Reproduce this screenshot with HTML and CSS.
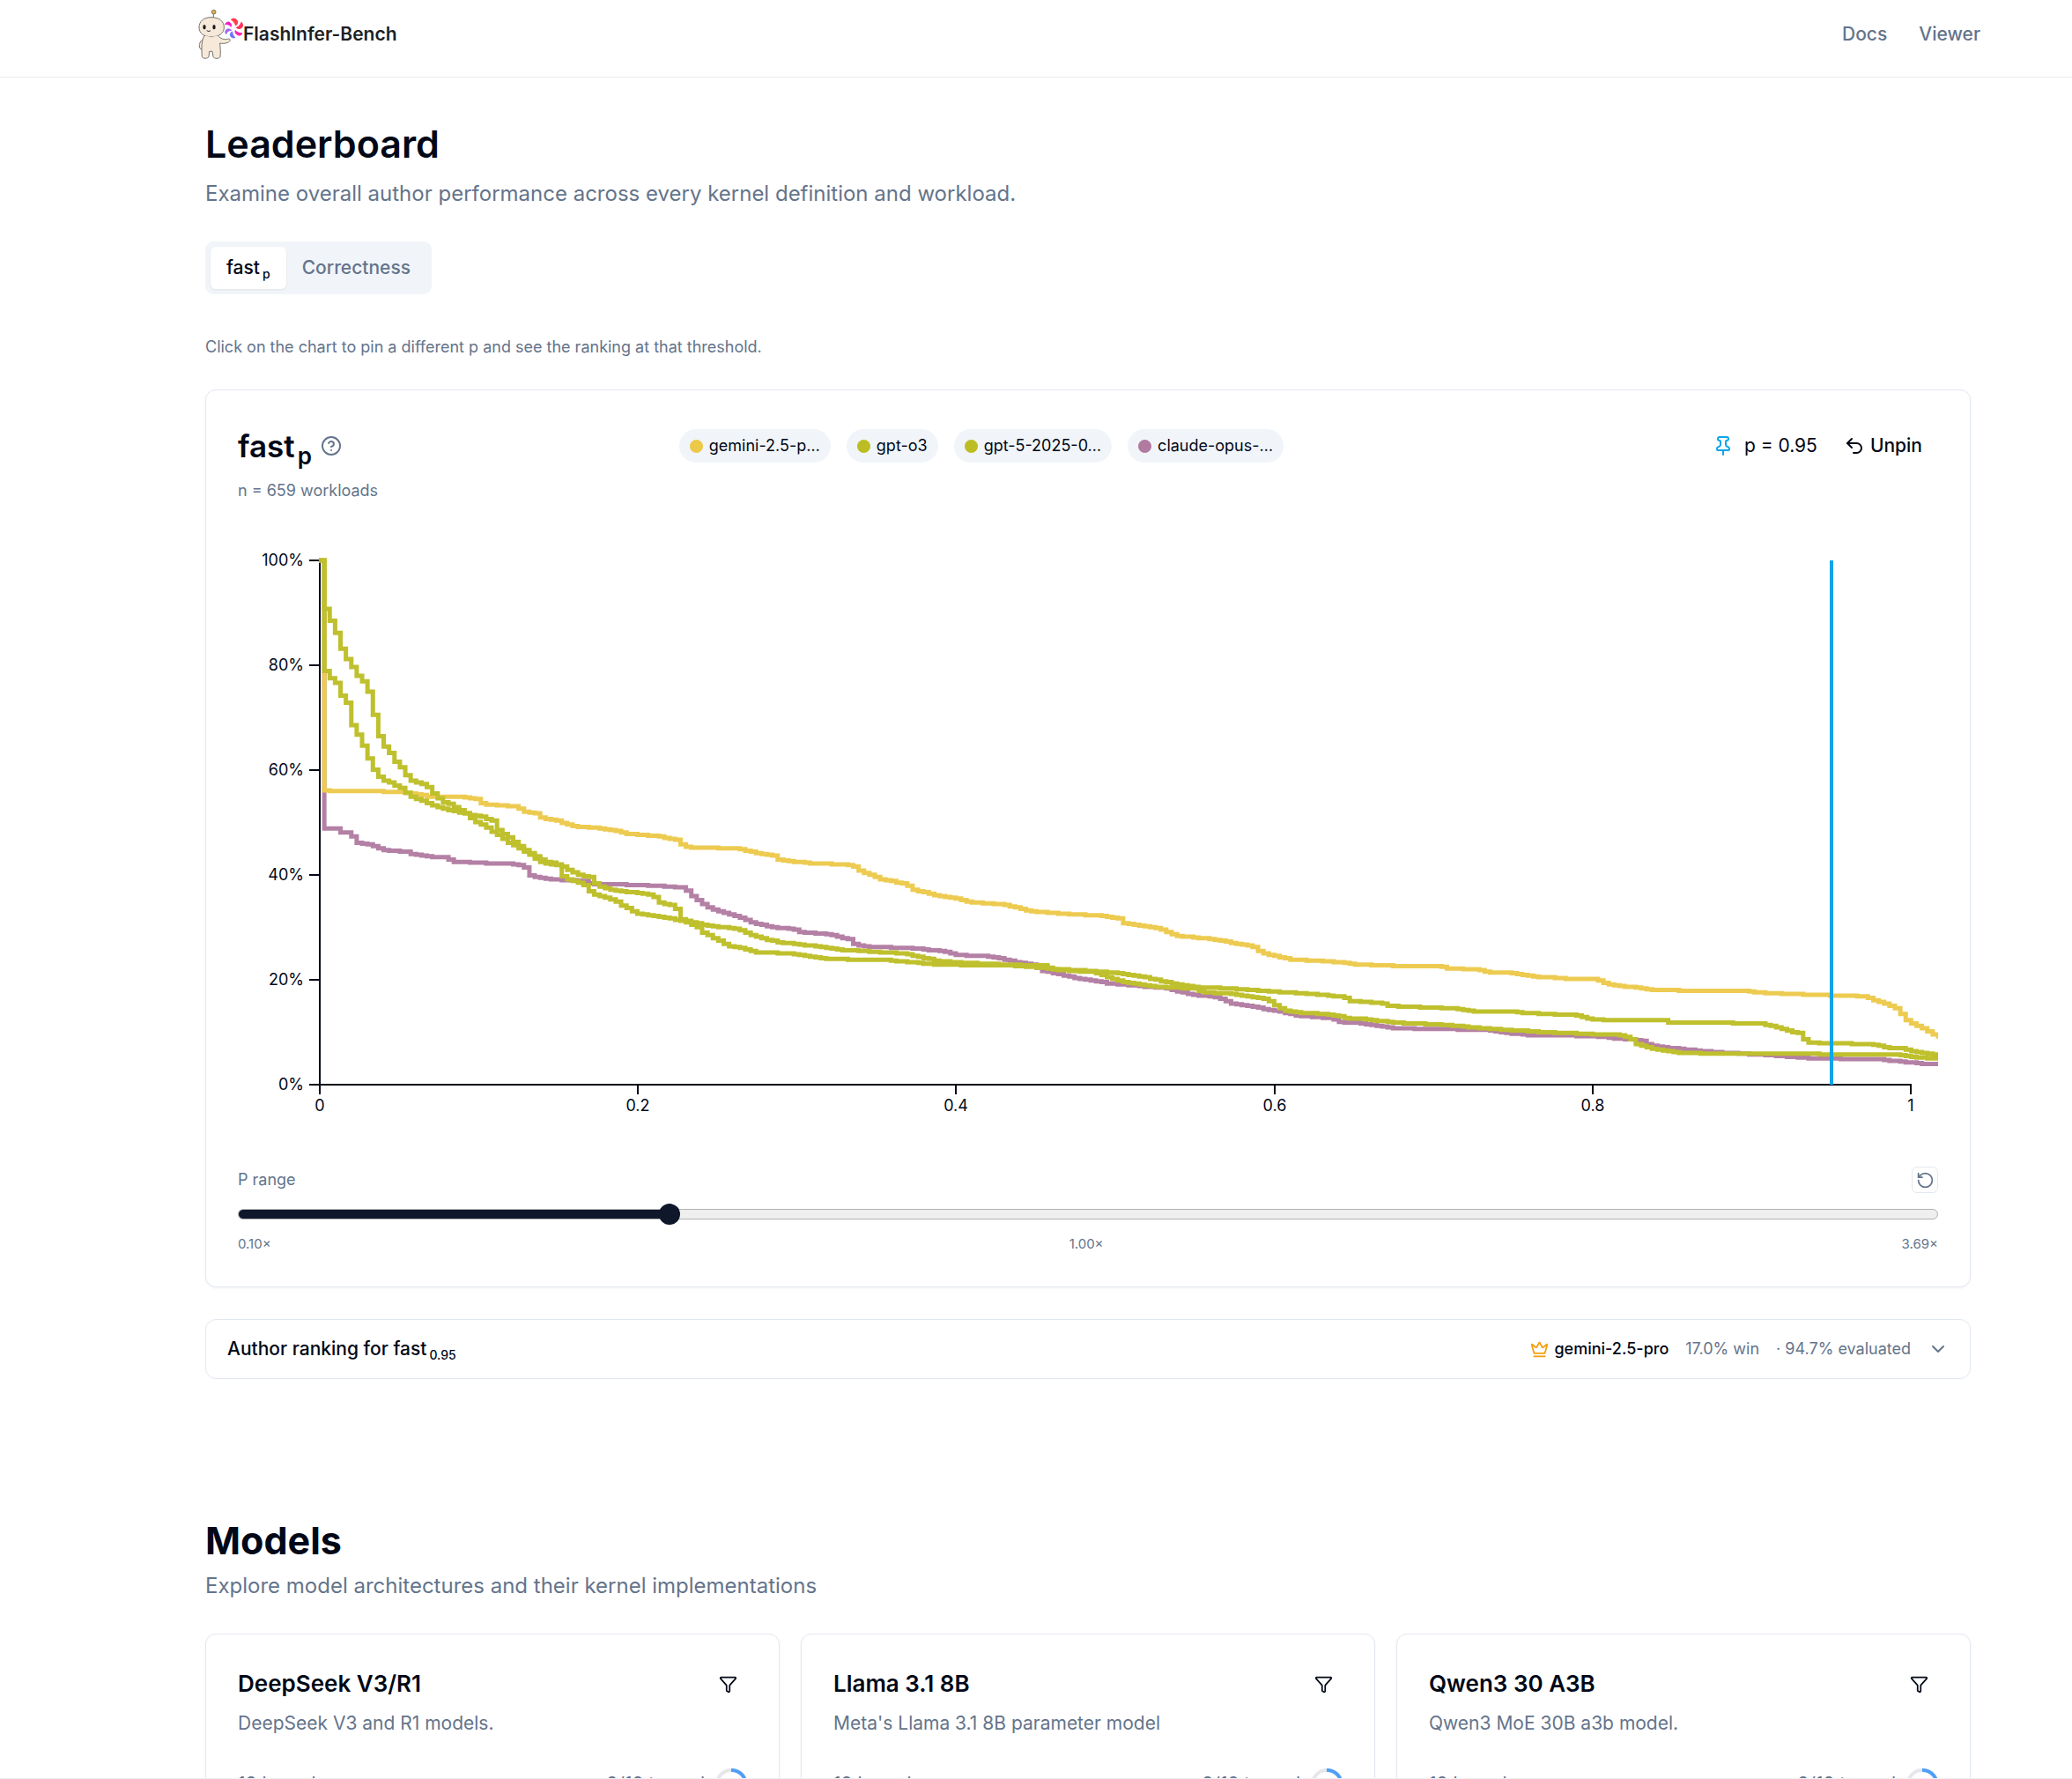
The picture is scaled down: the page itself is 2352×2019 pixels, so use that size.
FILE: index.html
```html
<!DOCTYPE html>
<html lang="en">
<head>
<meta charset="utf-8">
<title>FlashInfer-Bench</title>
<meta name="viewport" content="width=device-width, initial-scale=1">
<link rel="stylesheet" href="styles.css">
</head>
<body>
<svg class="sprite" aria-hidden="true">
  <symbol id="icon-funnel" viewBox="0 0 24 24"><path d="M10 20a1 1 0 0 0 .553.895l2 1A1 1 0 0 0 14 21v-7a2 2 0 0 1 .517-1.341L21.74 4.67A1 1 0 0 0 21 3H3a1 1 0 0 0-.742 1.67l7.225 7.989A2 2 0 0 1 10 14z"/></symbol>
</svg>
<div class="shell">
  <header class="topbar">
    <a class="brand" href="#">
      <svg class="mascot" viewBox="70 30 156 174" aria-hidden="true">
        <g fill="#f6e9da" stroke="#77716b" stroke-width="3" stroke-linejoin="round">
          <path d="M125 48v12" fill="none"/>
          <circle cx="126" cy="41" r="7" fill="#e3ad45"/>
          <path d="M91 134c-11 4-15 15-14 25 1 8 8 11 12 8"/>
          <path d="M94 121c-8 14-11 34-8 72 1 8 22 7 23 0l2-18h10l3 18c2 8 22 8 24 0 2-16 0-31-1-46 14 3 30-1 34-8 2-5-2-9-8-6-12 3-24-1-33-12z"/>
          <path d="M118 59c27 0 43 14 43 34 0 20-16 32-43 32s-42-12-42-32c0-20 15-34 42-34z"/>
        </g>
        <path d="M97 121q21 8 42 0v6H97z" fill="#f6e9da"/>
        <ellipse cx="94" cy="92" rx="5" ry="8" fill="#1c1a19"/>
        <ellipse cx="127" cy="92" rx="5" ry="8" fill="#1c1a19"/>
        <path d="M102 104q7 6 13 0" fill="none" stroke="#35302c" stroke-width="3"/>
        <g stroke-width="3" stroke-linejoin="round">
          <path d="M185 67c8-8 21-2 22 8 0 6-3 10-6 12-3-10-8-15-16-20z" fill="#ff3a4d" stroke="#ff3a4d"/>
          <path d="M220 76c7 7 6 17-2 20-6 3-12 1-15-2 9-3 13-9 17-18z" fill="#ff3158" stroke="#ff3158"/>
          <path d="M222 113c-2 9-12 9-18 4-5-4-6-9-5-13 8 7 14 9 23 9z" fill="#ff20b0" stroke="#ff20b0"/>
          <path d="M199 128c-9 3-17-2-17-9 0-6 3-10 7-11 0 9 4 15 10 20z" fill="#6d75fa" stroke="#6d75fa"/>
          <path d="M168 116c-5-7-2-16 5-17 6-1 10 1 13 4-10 1-15 5-18 13z" fill="#9b66f7" stroke="#9b66f7"/>
          <path d="M165 83c2-8 13-11 18-4 4 5 3 9 2 12-6-7-12-9-20-8z" fill="#f31fc6" stroke="#f31fc6"/>
        </g>
      </svg>
      <span class="wordmark">FlashInfer-Bench</span>
    </a>
    <nav class="nav"><a href="#">Docs</a><a href="#">Viewer</a></nav>
  </header>

  <main class="main">
    <section class="leaderboard">
      <h1 class="title">Leaderboard</h1>
      <p class="lead">Examine overall author performance across every kernel definition and workload.</p>
      <div class="tabs" role="tablist">
        <button class="tab tab-active" role="tab" aria-selected="true">fast<sub>p</sub></button>
        <button class="tab" role="tab" aria-selected="false">Correctness</button>
      </div>
      <p class="hint">Click on the chart to pin a different p and see the ranking at that threshold.</p>

      <div class="card chart-card">
        <div class="chart-head">
          <div class="chart-title">
            <h2>fast<sub>p</sub></h2>
            <svg class="icon icon-muted" viewBox="0 0 24 24" aria-hidden="true"><circle cx="12" cy="12" r="10"/><path d="M9.09 9a3 3 0 0 1 5.83 1c0 2-3 3-3 3"/><path d="M12 17h.01"/></svg>
          </div>
          <div class="legend">
            <button class="chip"><span class="dot dot-gemini"></span>gemini-2.5-p…</button>
            <button class="chip"><span class="dot dot-gpt"></span>gpt-o3</button>
            <button class="chip"><span class="dot dot-gpt"></span>gpt-5-2025-0…</button>
            <button class="chip"><span class="dot dot-claude"></span>claude-opus-…</button>
          </div>
          <div class="pin">
            <span class="pin-value"><svg class="icon icon-pin" viewBox="0 0 24 24" aria-hidden="true"><path d="M12 17v5"/><path d="M9 10.76a2 2 0 0 1-1.11 1.79l-1.78.9A2 2 0 0 0 5 15.24V16a1 1 0 0 0 1 1h12a1 1 0 0 0 1-1v-.76a2 2 0 0 0-1.11-1.79l-1.78-.9A2 2 0 0 1 15 10.76V7a1 1 0 0 1 1-1 2 2 0 0 0 0-4H8a2 2 0 0 0 0 4 1 1 0 0 1 1 1z"/></svg>p = 0.95</span>
            <button class="unpin"><svg class="icon" viewBox="0 0 24 24" aria-hidden="true"><path d="M9 14 4 9l5-5"/><path d="M4 9h10.5a5.5 5.5 0 0 1 5.5 5.5a5.5 5.5 0 0 1-5.5 5.5H11"/></svg>Unpin</button>
          </div>
        </div>
        <p class="count">n = 659 workloads</p>

        <svg class="chart" viewBox="0 0 1930 682" role="img" aria-label="fast p curves by author">
          <g class="axis">
            <path d="M81 30H93V625H81M81 149H93M81 268H93M81 387H93M81 506H93"/>
            <path d="M93 636V625H1899V636M454 625V636M815 625V636M1177 625V636M1538 625V636"/>
          </g>
          <g class="labels labels-y">
            <text x="75" y="36">100%</text><text x="75" y="155">80%</text><text x="75" y="274">60%</text><text x="75" y="393">40%</text><text x="75" y="512">20%</text><text x="75" y="631">0%</text>
          </g>
          <g class="labels labels-x">
            <text x="93" y="655">0</text><text x="454" y="655">0.2</text><text x="815" y="655">0.4</text><text x="1177" y="655">0.6</text><text x="1538" y="655">0.8</text><text x="1899" y="655">1</text>
          </g>
          <g id="curves" class="curves"></g>
          <path class="pin-line" d="M1809 30V625"/>
        </svg>

        <div class="range-head">
          <label for="p-range">P range</label>
          <button class="reset" aria-label="Reset range"><svg class="icon icon-small" viewBox="0 0 24 24" aria-hidden="true"><path d="M3 12a9 9 0 1 0 9-9 9.75 9.75 0 0 0-6.74 2.74L3 8"/><path d="M3 3v5h5"/></svg></button>
        </div>
        <input id="p-range" class="range" type="range" min="0.1" max="3.69" step="0.01" value="1">
        <div class="range-labels"><span>0.10×</span><span>1.00×</span><span>3.69×</span></div>
      </div>

      <button class="ranking" aria-expanded="false">
        <span class="ranking-title">Author ranking for fast<sub>0.95</sub></span>
        <span class="ranking-info">
          <span class="winner"><svg class="icon icon-crown" viewBox="0 0 24 24" aria-hidden="true"><path d="M11.562 3.266a.5.5 0 0 1 .876 0L15.39 8.87a1 1 0 0 0 1.516.294L21.183 5.5a.5.5 0 0 1 .798.519l-2.834 10.246a1 1 0 0 1-.956.734H5.81a1 1 0 0 1-.957-.734L2.02 6.02a.5.5 0 0 1 .798-.519l4.276 3.664a1 1 0 0 0 1.516-.294z"/><path d="M5 21h14"/></svg>gemini-2.5-pro</span>
          <span>17.0% win</span>
          <span>· 94.7% evaluated</span>
          <svg class="icon" viewBox="0 0 24 24" aria-hidden="true"><path d="m6 9 6 6 6-6"/></svg>
        </span>
      </button>
    </section>

    <section class="models">
      <h1 class="title title-bold">Models</h1>
      <p class="lead">Explore model architectures and their kernel implementations</p>
      <div class="model-grid">
        <article class="card">
          <div class="model-head"><h3>DeepSeek V3/R1</h3><button class="filter" aria-label="Filter"><svg class="icon icon-small"><use href="#icon-funnel"/></svg></button></div>
          <p class="model-text">DeepSeek V3 and R1 models.</p>
          <div class="model-stats"><span>18 kernels</span><span class="traced">8/18 traced<svg class="ring" viewBox="0 0 36 36" aria-hidden="true"><circle cx="18" cy="18" r="16"/><path d="M18 2a16 16 0 1 1-5 31"/></svg></span></div>
        </article>
        <article class="card">
          <div class="model-head"><h3>Llama 3.1 8B</h3><button class="filter" aria-label="Filter"><svg class="icon icon-small"><use href="#icon-funnel"/></svg></button></div>
          <p class="model-text">Meta's Llama 3.1 8B parameter model</p>
          <div class="model-stats"><span>18 kernels</span><span class="traced">8/18 traced<svg class="ring" viewBox="0 0 36 36" aria-hidden="true"><circle cx="18" cy="18" r="16"/><path d="M18 2a16 16 0 1 1-5 31"/></svg></span></div>
        </article>
        <article class="card">
          <div class="model-head"><h3>Qwen3 30 A3B</h3><button class="filter" aria-label="Filter"><svg class="icon icon-small"><use href="#icon-funnel"/></svg></button></div>
          <p class="model-text">Qwen3 MoE 30B a3b model.</p>
          <div class="model-stats"><span>18 kernels</span><span class="traced">8/18 traced<svg class="ring" viewBox="0 0 36 36" aria-hidden="true"><circle cx="18" cy="18" r="16"/><path d="M18 2a16 16 0 1 1-5 31"/></svg></span></div>
        </article>
      </div>
    </section>
  </main>
</div>
<script src="chart.js"></script>
</body>
</html>
```
FILE: styles.css
```css
* { box-sizing: border-box; }
body { margin: 0; background: #fff; color: #020817; font-family: Inter, "Liberation Sans", sans-serif; font-size: 21px; line-height: 30px; }
h1, h2, h3, p { margin: 0; }
a { color: inherit; text-decoration: none; }
button { margin: 0; padding: 0; border: 0; background: none; color: inherit; font: inherit; cursor: pointer; }
sub { line-height: 0; }

.sprite { display: none; }
.shell { height: 100vh; overflow-x: hidden; overflow-y: auto; scrollbar-width: none; border-bottom: 1px solid #f1eff7; }
.icon { width: 24px; height: 24px; flex: none; fill: none; stroke: currentColor; stroke-width: 2; stroke-linecap: round; stroke-linejoin: round; }
.icon-small { width: 21px; height: 21px; }
.icon-muted { color: #64748b; }
.icon-pin { color: #0ea5e9; }
.icon-crown { width: 21px; height: 21px; color: #f59e0b; }

.topbar { display: flex; justify-content: space-between; align-items: center; padding: 10px 104px 19px 224px; border-bottom: 1px solid #ebebed; }
.brand { display: flex; align-items: center; }
.mascot { width: 52px; height: 58px; }
.wordmark { color: #1f1f22; font-size: 21px; font-weight: 600; }
.nav { display: flex; gap: 36px; color: #64748b; font-weight: 500; }

.main { padding: 48px 115px 48px 233px; }
.title { font-size: 43px; line-height: 54px; font-weight: 600; }
.title-bold { font-weight: 700; }
.lead { color: #64748b; font-size: 24px; line-height: 36px; }
.leaderboard .lead { margin-top: 12px; }
.models { margin-top: 156px; }
.models .lead { margin-top: 7px; }

.tabs { display: inline-flex; margin-top: 36px; padding: 6px; border-radius: 9px; background: #f1f5f9; vertical-align: top; }
.tab { height: 48px; padding: 0 18px; border-radius: 6px; color: #64748b; font-weight: 500; }
.tab-active { background: #fff; color: #020817; box-shadow: 0 1px 3px rgba(0, 0, 0, .08); }
.tab sub { margin-left: 3px; font-size: 14px; }
.hint { margin-top: 46px; color: #64748b; font-size: 18px; line-height: 27px; }

.card { padding: 36px; border: 1px solid #e2e8f0; border-radius: 12px; background: #fff; box-shadow: 0 1px 3px rgba(0, 0, 0, .05); }
.chart-card { margin-top: 35px; }
.chart-head { display: flex; justify-content: space-between; align-items: center; height: 54px; }
.chart-title { display: flex; align-items: center; gap: 10px; }
.chart-title h2 { font-size: 35px; line-height: 54px; font-weight: 600; }
.chart-title sub { margin-left: 3px; font-size: 26px; }
.legend { display: flex; gap: 18px; }
.chip { display: flex; align-items: center; gap: 7px; height: 38px; padding: 0 12px; border-radius: 19px; background: #f1f5f9; font-size: 18px; }
.dot { width: 15px; height: 15px; border-radius: 50%; }
.dot-gemini { background: #edc948; }
.dot-gpt { background: #bcbd22; }
.dot-claude { background: #b07aa1; }
.pin { display: flex; justify-content: flex-end; align-items: center; gap: 30px; min-width: 360px; padding-right: 18px; }
.pin-value { display: flex; align-items: center; gap: 12px; }
.unpin { display: flex; align-items: center; gap: 6px; font-weight: 500; }
.count { margin-top: 10px; color: #64748b; font-size: 18px; line-height: 27px; }

.chart { display: block; width: 100%; height: auto; margin-top: 36px; cursor: crosshair; }
.axis { fill: none; stroke: #020817; stroke-width: 2; }
.labels { fill: #020817; font-size: 18px; }
.labels-y { text-anchor: end; }
.labels-x { text-anchor: middle; }
.curves { fill: none; stroke-width: 5; opacity: .95; }
.curve-claude { stroke: #b07aa1; }
.curve-gemini { stroke: #edc948; }
.curve-gpt { stroke: #bcbd22; }
.pin-line { stroke: #0ea5e9; stroke-width: 4; }

.range-head { display: flex; justify-content: space-between; align-items: center; margin-top: 36px; color: #64748b; font-size: 18px; }
.reset { display: flex; align-items: center; justify-content: center; width: 30px; height: 30px; border: 1px solid #e2e8f0; border-radius: 6px; }
.range { display: block; width: 100%; height: 24px; margin: 12px 0 0; appearance: none; background: none; }
.range::-webkit-slider-runnable-track { height: 12px; border: 1px solid #b2b2b2; border-radius: 6px; background: linear-gradient(to right, #0f172a 25%, #efefef 25%); }
.range::-webkit-slider-thumb { appearance: none; width: 24px; height: 24px; margin-top: -7px; border-radius: 50%; background: #0f172a; }
.range-labels { display: flex; justify-content: space-between; margin-top: 10px; color: #64748b; font-size: 15px; line-height: 24px; }

.ranking { display: flex; justify-content: space-between; align-items: center; width: 100%; height: 68px; margin-top: 36px; padding: 0 24px; border: 1px solid #e2e8f0; border-radius: 12px; }
.ranking-title { font-weight: 500; }
.ranking-title sub { margin-left: 3px; font-size: 14px; }
.ranking-info { display: flex; align-items: center; gap: 19px; color: #64748b; font-size: 18px; }
.winner { display: flex; align-items: center; gap: 6px; color: #020817; font-weight: 500; }

.model-grid { display: grid; grid-template-columns: repeat(3, 1fr); gap: 24px; margin-top: 36px; }
.model-head { display: flex; justify-content: space-between; align-items: center; }
.model-head h3 { font-size: 26px; line-height: 40px; font-weight: 600; }
.filter { display: flex; padding: 0 11px; }
.model-text { margin-top: 10px; color: #64748b; }
.model-stats { display: flex; justify-content: space-between; align-items: center; margin-top: 36px; color: #64748b; }
.traced { display: flex; align-items: center; gap: 12px; }
.ring { width: 36px; height: 36px; fill: none; stroke-width: 4; }
.ring circle { stroke: #e5e7eb; }
.ring path { stroke: #4f9ff8; }
```
FILE: chart.js
```js
// Each curve is a list of [bin, percent] knots; 300 bins span the visible p range.
const curves = [
  { name: "claude", knots: [[1,48.8],[3.5,48.8],[4,48.1],[5.5,48.1],[6,47.3],[7,46.2],[9.8,45.6],[12.1,44.7],[16.5,44.4],[16.8,44.1],[20.3,43.5],[23.5,43.35],[24.4,42.55],[29.6,42.3],[36.3,42.1],[38.1,41.45],[38.4,40],[41.3,39.4],[44.8,39],[49.5,38.85],[50.1,38.3],[58.8,38.1],[67.8,37.6],[68.1,36.7],[69.9,35.3],[71.9,33.8],[78,31.9],[80.1,30.9],[84.5,29.9],[87.4,29.8],[88.9,29.1],[94.4,28.7],[98,27.7],[99.1,26.8],[101.3,26.3],[109.3,26.05],[115.9,25.4],[118.1,24.7],[124.6,24.45],[129,23.35],[131.9,22.9],[134.1,21.7],[140.7,20.25],[146.5,19.25],[156.7,18.45],[160.4,17.45],[166.9,16.5],[169.1,15.5],[176.4,14.25],[181.5,13.15],[187.4,12.7],[189.5,11.85],[192.3,11.75],[199.6,10.75],[215.6,10.45],[223.7,9.45],[234.6,9.3],[243.4,8.6],[245.5,8.2],[246.3,7.5],[252.8,6.7],[260.1,6.1],[268.2,5.65],[276.9,5],[289.3,4.8],[296.6,4],[300,3.9]] },
  { name: "gemini", knots: [[1,56.1],[5,55.95],[14.5,55.9],[17,55.5],[20,55],[26.7,54.9],[29.6,54.3],[30,53.7],[31.4,53.4],[36.6,53],[37.5,52.1],[40.4,51.75],[41.3,50.7],[44,50.4],[45.4,49.7],[47.7,49.2],[51.2,49],[54.1,48.6],[56.5,47.9],[62.3,47.4],[66.4,46.7],[67.1,45.65],[69,45.2],[76.9,45.1],[81.6,44.1],[84.5,43.6],[85,42.9],[91,42.2],[96.2,42.05],[98.7,41.8],[99.8,40.9],[104.2,39.1],[108.2,38.4],[110,37.2],[114.4,36],[118,35.5],[120.2,34.8],[126.8,34.4],[131.2,33.15],[137.8,32.6],[143.6,32.3],[148,31.75],[148.7,30.9],[155.3,29.8],[158.9,28.4],[165.5,27.7],[172.8,26.4],[174.6,25.1],[180,23.85],[187.4,23.5],[192.3,22.95],[196.7,22.7],[207.6,22.6],[209,22.2],[215,21.9],[215.6,21.5],[221,21.3],[224.4,20.65],[231,20.25],[236,20.2],[239,19.1],[248,18],[264.5,17.9],[265.3,17.6],[272.5,17.3],[280.6,17.05],[286.4,16.85],[287.5,16.15],[290,15.5],[292.2,14.4],[293,13.5],[293.7,12.4],[295.1,11.55],[297.3,10.7],[298.4,9.9],[300,8.8]] },
  { name: "gpt", knots: [[1,78.9],[2,77.5],[3,76.7],[4,74.2],[5,72.8],[6,68.6],[7,66.7],[8,64.6],[9,62.2],[10,60.15],[11,58.7],[12,58],[13,57.7],[14,57.1],[15,56.6],[16,55.7],[17,54.9],[19,54.15],[21,53.3],[23,52.6],[26,51.9],[27.3,51.6],[28.5,50.2],[30.5,49.4],[33.4,47.3],[34.6,46.4],[37.2,45],[41.3,42.3],[44.2,41.8],[44.3,40.6],[45.3,39.3],[48.9,38.3],[49.5,37.2],[51.2,36.2],[54.4,35.3],[56.2,34.05],[59.1,32.6],[63.5,32],[68.1,31],[70.5,29.8],[71,28.95],[73.4,27.8],[75.7,26.4],[78,26.05],[80.9,25.25],[87.4,25],[94.7,23.95],[105,23.75],[114.4,22.9],[128,22.7],[133.4,22.35],[136.3,21.9],[143.6,21.45],[145.8,20.55],[149.8,19.4],[154.5,18.7],[162.5,18.3],[163.3,17.65],[169.1,17.35],[175.7,16.2],[176.8,15.35],[178.6,14.2],[182.2,13.7],[187.4,13.4],[190.3,12.65],[192.3,12.6],[198.9,11.85],[207.6,11.45],[216.4,10.7],[224.4,10.15],[236,9.6],[240,9.6],[242.6,9.05],[244.1,7.65],[247.7,6.7],[252.1,6.1],[257.9,5.9],[292.2,5.8],[294.4,5.35],[300,4.9]] },
  { name: "gpt", knots: [[1,90.8],[2,88.4],[3,86.15],[4,83.1],[5,81.2],[6,79.65],[7,78],[8,77],[9,75],[10,70.6],[11,66.5],[12,64.5],[13,63.3],[14,61.55],[15,60.5],[16,59.1],[17,57.9],[19,57.35],[20,56.7],[21,55.6],[22,54.6],[23,53.8],[24,53.5],[25,52.9],[27.3,51.6],[29.9,51.2],[32.3,50.2],[32.6,48.8],[34.9,47.2],[37.2,45.3],[41.3,42.7],[44.2,42],[47.1,40.4],[50.1,39.5],[51.2,38.1],[54.4,37.1],[61.7,36.2],[62.9,34.8],[65.8,34],[67,31.5],[68.1,31.2],[71.6,30.35],[75.7,29.9],[78,29.5],[80.9,28.2],[85.2,27.15],[91,26.5],[96.2,25.75],[108.2,25],[114.4,23.6],[121.7,23.1],[134,22.7],[135.6,22.05],[142.9,21.7],[148,21.3],[152.3,20.65],[156,19.7],[161.8,18.6],[167.7,18.4],[172.8,18],[183.7,17.3],[189.9,16.7],[190.3,16],[192.3,15.9],[197.4,15.5],[198.1,15],[209.8,14.55],[214.2,14],[221.5,14],[222.6,13.7],[233.1,13.25],[234.6,12.6],[238.3,12.3],[249.2,12.25],[249.9,11.9],[258.7,11.85],[267.4,11.6],[274.4,9.7],[275.1,8.5],[275.8,8],[287.8,7.7],[290,7.1],[293.3,6.9],[295.9,6.2],[300,5.7]] }
];

const left = 92, right = 1930, base = 625, height = 595, bins = 300, workloads = 659;

function valueAt(knots, bin) {
  const next = knots.findIndex(k => k[0] >= bin);
  if (next === 0) return knots[0][1];
  const [x0, y0] = knots[next - 1], [x1, y1] = knots[next];
  return y0 + (y1 - y0) * (bin - x0) / (x1 - x0);
}

for (const { name, knots } of curves) {
  let d = `M${left} ${base - height}`;
  for (let bin = 1; bin <= bins; bin++) {
    const x = left + (right - left) * bin / bins;
    const share = Math.round(valueAt(knots, bin) / 100 * workloads) / workloads;
    d += `H${x.toFixed(2)}V${(base - height * share).toFixed(2)}`;
  }
  const path = document.createElementNS("http://www.w3.org/2000/svg", "path");
  path.setAttribute("class", `curve-${name}`);
  path.setAttribute("d", d);
  document.getElementById("curves").append(path);
}
```
